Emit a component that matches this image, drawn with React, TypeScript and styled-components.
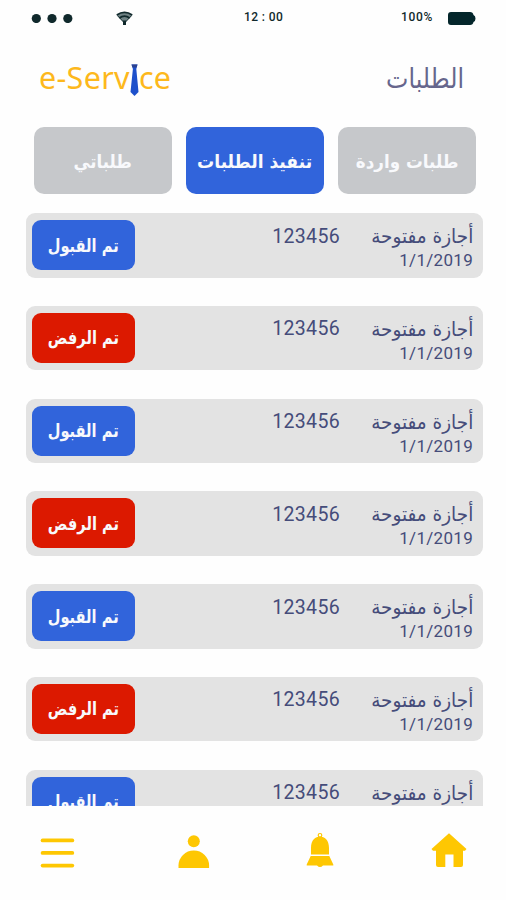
import React from 'react';
import styled, { createGlobalStyle } from 'styled-components';

const GlobalStyle = createGlobalStyle`
  * { box-sizing: border-box; }
  body { margin: 0; background: #fefefe; font-family: "DejaVu Sans", sans-serif; }
`;

const Screen = styled.div`
  width: 506px;
  height: 900px;
  overflow: hidden;
  display: flex;
  flex-direction: column;
  background: #fefefe;
`;

const StatusBar = styled.header`
  height: 36px;
  flex: none;
  padding: 0 30px 0 31px;
  display: grid;
  grid-template-columns: 85px 128px 157px 47px 28px;
  align-items: center;
  color: #10292c;
  font: 500 12px/14px Roboto, sans-serif;
  svg { display: block; }
`;

const StatusText = styled.span<{ $spacing?: number }>`
  white-space: pre;
  letter-spacing: ${(p) => p.$spacing ?? 0}px;
  margin-top: -2px;
`;

const TitleBar = styled.div`
  height: 91px;
  flex: none;
  padding: 0 42px 0 39px;
  display: flex;
  justify-content: space-between;
  align-items: flex-start;
`;

const Logo = styled.div`
  display: flex;
  margin-top: 20px;
  font: 400 30.5px/42px "Noto Sans", sans-serif;
  letter-spacing: 0.3px;
  color: #fdb81c;
  svg { display: block; margin: 8px 0 0; }
`;

const Arabic = styled.span<{ $x: number; $y?: number }>`
  display: inline-block;
  white-space: nowrap;
  direction: rtl;
  transform: scale(${(p) => p.$x}, ${(p) => p.$y ?? 1});
`;

const Title = styled.h1`
  margin: 25px 0 0;
  font-size: 25px;
  line-height: 36px;
  font-weight: 400;
  color: #66668c;
  ${Arabic} { transform-origin: right center; }
`;

const Tabs = styled.nav`
  flex: none;
  display: grid;
  grid-template-columns: repeat(3, 138px);
  gap: 14px;
  padding-left: 34px;
`;

const Tab = styled.button<{ $active?: boolean }>`
  height: 67px;
  padding: 2px 0 0;
  border: 0;
  border-radius: 10px;
  background: ${(p) => (p.$active ? '#3164db' : '#c6c8cb')};
  color: #f8f9fc;
  display: flex;
  align-items: center;
  justify-content: center;
  font: 700 18px/26px "DejaVu Sans", sans-serif;
`;

const List = styled.main`
  flex: none;
  height: 612px;
  padding: 19px 23px 0 26px;
  overflow: hidden;
  display: flex;
  flex-direction: column;
  gap: 28.3px;
`;

const Card = styled.article`
  flex: none;
  height: 64.5px;
  border-radius: 9px;
  background: #e3e3e3;
  padding: 0 10px 0 6px;
  display: grid;
  grid-template-columns: 103px 205px 1fr;
  color: #454c7a;
`;

const Status = styled.button<{ $rejected?: boolean }>`
  height: 50px;
  margin-top: 7px;
  padding: 1px 0 0;
  border: 0;
  border-radius: 9px;
  background: ${(p) => (p.$rejected ? '#dc1900' : '#3164db')};
  color: #f8f9fc;
  display: flex;
  align-items: center;
  justify-content: center;
  font: 700 17px/24px "DejaVu Sans", sans-serif;
`;

const Num = styled.span`
  margin-top: 11.5px;
  text-align: right;
  font: 400 19.5px/24px Roboto, sans-serif;
  letter-spacing: 0.35px;
`;

const Details = styled.div`
  display: flex;
  flex-direction: column;
  align-items: flex-end;
  padding-top: 11px;
  ${Arabic} { transform-origin: right center; }
`;

const Kind = styled.span`
  height: 24px;
  font-size: 19px;
  line-height: 24px;
`;

const Day = styled.span`
  font: 400 17px/24px Roboto, sans-serif;
  letter-spacing: 0.3px;
`;

const BottomBar = styled.nav`
  flex: 1;
  display: grid;
  grid-template-columns: 138px 128px 125px 36px;
  align-items: start;
  padding: 25px 0 0 40px;
  color: #fec702;
  svg { display: block; fill: currentColor; }
`;

const requests = [false, true, false, true, false, true, false];

const Dots = () => (
  <svg width="42" height="10" viewBox="0 0 42 10" fill="currentColor">
    <circle cx="5.3" cy="5.5" r="4.6" />
    <circle cx="21" cy="5.5" r="4.6" />
    <circle cx="36.8" cy="5.5" r="4.6" />
  </svg>
);

const Wifi = () => (
  <svg width="17" height="15" viewBox="0 0 17 15" fill="none" stroke="currentColor">
    <path d="M1 4.2Q8.5-1 16 4.2L9.6 11V13.5H7.4V11Z" fill="#6f8284" stroke="none" />
    <path d="M.8 4Q8.5-1.2 16.2 4M3.3 7Q8.5 3.2 13.7 7" strokeWidth="1.8" />
    <path d="M1.4 4.6L7.5 11M15.6 4.6L9.5 11" strokeWidth="1" />
    <path d="M7 9.5H10V14H7Z" fill="currentColor" stroke="none" />
  </svg>
);

const Battery = () => (
  <svg width="28" height="13" viewBox="0 0 28 13" fill="#04262b">
    <path d="M3 0H22Q25 0 25.5 3Q27.5 3.5 27.5 6.5T25.5 10Q25 13 22 13H3Q0 13 0 10V3Q0 0 3 0Z" />
  </svg>
);

const Tie = () => (
  <svg width="9" height="33" viewBox="0 0 9 33">
    <path d="M1.5.5H7.5L6.3 5L8.5 28L4.5 32L.5 28L2.9 5Z" fill="#1d50cb" />
    <path d="M1.5.5H7.5L6.5 3.5H2.5Z" fill="#2b4190" />
  </svg>
);

export default function App() {
  return (
    <>
      <GlobalStyle />
      <Screen>
        <StatusBar>
          <Dots />
          <Wifi />
          <StatusText $spacing={0.4}>12 : 00</StatusText>
          <StatusText $spacing={0.7}>100%</StatusText>
          <Battery />
        </StatusBar>
        <TitleBar>
          <Logo>
            <span>e-Serv</span>
            <Tie />
            <span>ce</span>
          </Logo>
          <Title>
            <Arabic $x={0.95} $y={1.08}>الطلبات</Arabic>
          </Title>
        </TitleBar>
        <Tabs>
          <Tab><Arabic $x={0.92}>طلباتي</Arabic></Tab>
          <Tab $active><Arabic $x={0.95}>تنفيذ الطلبات</Arabic></Tab>
          <Tab><Arabic $x={0.93}>طلبات واردة</Arabic></Tab>
        </Tabs>
        <List>
          {requests.map((rejected, i) => (
            <Card key={i}>
              <Status $rejected={rejected}>
                <Arabic $x={0.86} $y={1.05}>{rejected ? 'تم الرفض' : 'تم القبول'}</Arabic>
              </Status>
              <Num>123456</Num>
              <Details>
                <Kind><Arabic $x={0.97} $y={1.04}>أجازة مفتوحة</Arabic></Kind>
                <Day>1/1/2019</Day>
              </Details>
            </Card>
          ))}
        </List>
        <BottomBar>
          <svg width="35" height="44" viewBox="0 0 35 44">
            <rect x="0.7" y="7.5" width="33.5" height="3.8" rx="1.9" />
            <rect x="0.7" y="20" width="33.5" height="3.8" rx="1.9" />
            <rect x="0.7" y="32.7" width="33.5" height="3.8" rx="1.9" />
          </svg>
          <svg width="32" height="44" viewBox="0 0 32 44">
            <circle cx="15.8" cy="10.3" r="6" />
            <path d="M.5 37V34.5A15.3 15 0 0 1 31.1 34.5V37Z" />
          </svg>
          <svg width="28" height="44" viewBox="0 0 28 44">
            <circle cx="14" cy="4.3" r="1.8" fill="none" stroke="currentColor" strokeWidth="1.2" />
            <path d="M5 23.5V17C5 9 9.5 5.5 14 5.5S23 9 23 17V23.5ZM4.7 25H23.3L27.3 33.5V34.5H17Q14 37.5 11 34.5H.7V33.5Z" />
          </svg>
          <svg width="36" height="44" viewBox="0 0 36 44">
            <path d="M18 2.2L35.5 18L34 19.7H32V34Q32 36 30 36H22.5V23.5H14.3V36H7Q5 36 5 34V19.7H2L.5 18Z" />
          </svg>
        </BottomBar>
      </Screen>
    </>
  );
}
